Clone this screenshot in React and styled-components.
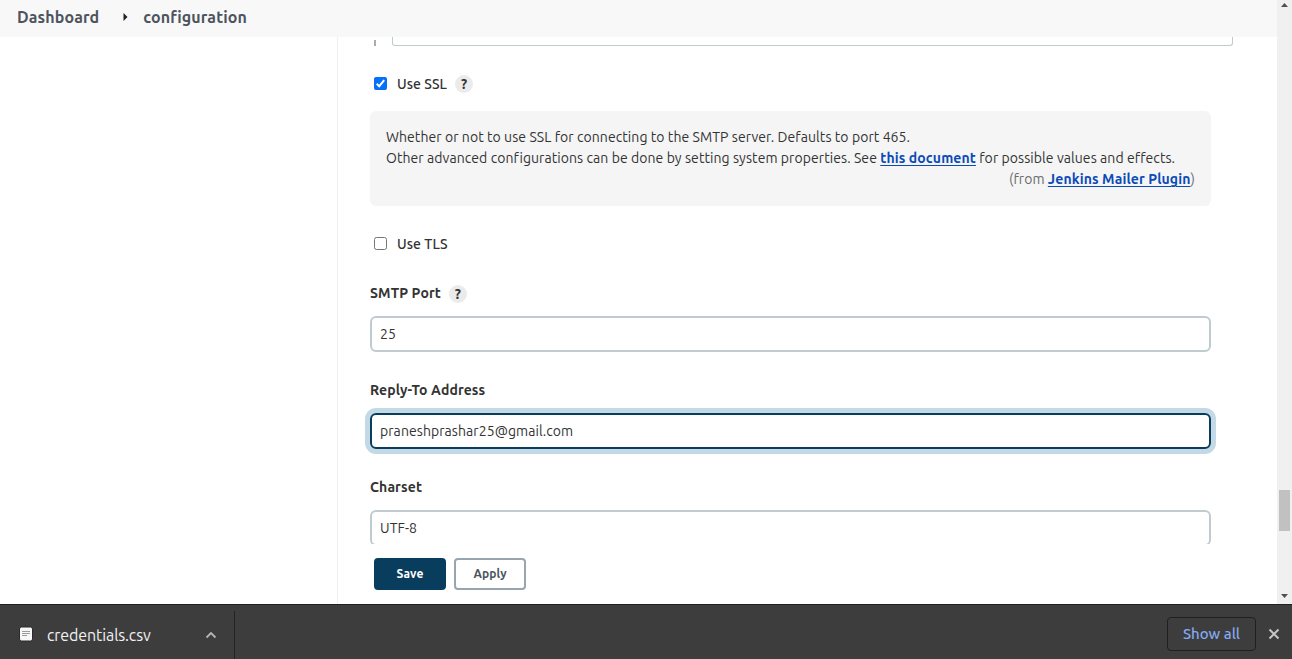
import React from 'react';
import styled, { createGlobalStyle } from 'styled-components';

const GlobalStyle = createGlobalStyle`
  *, *::before, *::after { box-sizing: border-box; }
  body {
    margin: 0;
    overflow: hidden;
    background: #fff;
    color: #333;
    font-family: Ubuntu, "Noto Sans", "Open Sans", sans-serif;
    font-size: 14px;
    line-height: 21px;
  }
`;

const Window = styled.div`
  display: flex;
  flex-direction: column;
  width: 100%;
  height: 100vh;
`;

const Page = styled.div`
  display: flex;
  height: 604px;
  flex: none;
`;

const PageBody = styled.div`
  display: flex;
  flex-direction: column;
  flex: 1;
  min-width: 0;
`;

const Breadcrumbs = styled.nav`
  display: flex;
  align-items: center;
  height: 37px;
  flex: none;
  padding: 0 17px 3px;
  background: #f8f8f8;
`;

const Crumb = styled.span`
  color: #4d545d;
  font-size: 16px;
  font-weight: 600;
  letter-spacing: 0.12px;
  white-space: nowrap;
`;

const CrumbArrow = styled.svg`
  width: 5px;
  height: 8px;
  margin: 0 15px 0 24px;
`;

const Columns = styled.div`
  display: flex;
  flex: 1;
  min-height: 0;
`;

const SidePanel = styled.aside`
  width: 338px;
  flex: none;
  border-right: 1px solid #f0f0f0;
`;

const Main = styled.main`
  display: flex;
  flex-direction: column;
  flex: 1;
  min-width: 0;
`;

const Form = styled.div`
  height: 507px;
  flex: none;
  overflow: hidden;
  padding: 0 66px 0 32px;
`;

const NestedEntry = styled.div`
  display: flex;
  height: 9px;
  margin: 0 -22px 0 4px;
`;

const NestedMarker = styled.div`
  width: 2px;
  height: 6px;
  margin: 3px 16px 0 0;
  background: #a9abad;
`;

const NestedInput = styled.div`
  flex: 1;
  border: solid #c0cbd0;
  border-width: 0 1px 1px;
  border-radius: 0 0 3px 3px;
`;

const CheckRow = styled.label`
  display: flex;
  align-items: center;
  height: 20px;
  margin-top: ${(p) => p.$gap}px;
  padding-left: 4px;
`;

const Box = styled.svg`
  width: 13px;
  height: 13px;
  margin: 0 10px 1px 0;
`;

const CheckLabel = styled.span`
  font-weight: 500;
  letter-spacing: 0.05px;
`;

const Help = styled.span`
  display: flex;
  align-items: center;
  justify-content: center;
  width: 18px;
  height: 18px;
  margin-left: 8px;
  border-radius: 50%;
  background: #ebebeb;
  font-size: 14px;
  font-weight: 700;
  line-height: 18px;
`;

const HelpPanel = styled.section`
  height: 95px;
  margin-top: 17px;
  padding: 16px;
  border-radius: 6px;
  background: #f5f5f5;
  letter-spacing: 0.07px;
  white-space: nowrap;
`;

const Source = styled.div`
  color: #6b6b6b;
  text-align: right;
`;

const Link = styled.a`
  color: #0b4bb8;
  font-weight: 700;
  letter-spacing: 0.11px;
  text-decoration: underline;
  text-underline-offset: 2px;
  text-decoration-thickness: 1px;
`;

const Field = styled.div`
  margin-top: ${(p) => p.$gap}px;
`;

const FieldLabel = styled.div`
  display: flex;
  align-items: center;
  height: 20px;
  margin-bottom: 13px;
  font-weight: 600;
  letter-spacing: 0.12px;

  ${Help} { margin-top: 2px; }
`;

const Input = styled.div`
  display: flex;
  align-items: center;
  height: 36px;
  padding: 0 8px;
  border: 2px solid ${(p) => (p.$focused ? '#083d5e' : '#c0cbd0')};
  border-radius: 6px;
  box-shadow: ${(p) => (p.$focused ? '0 0 0 5px #c3d9e6' : 'none')};
  letter-spacing: 0.07px;
`;

const Actions = styled.div`
  display: flex;
  gap: 8px;
  padding: 14px 36px;
`;

const Button = styled.button`
  width: 72px;
  height: 32px;
  padding: 0 0 1px;
  border: 2px solid ${(p) => (p.$primary ? '#083d5e' : '#98a4ae')};
  border-radius: 4px;
  background: ${(p) => (p.$primary ? '#083d5e' : '#fff')};
  color: ${(p) => (p.$primary ? '#fff' : '#4d545d')};
  font: 700 12px/18px Ubuntu, "Noto Sans", sans-serif;
  letter-spacing: 0.1px;
`;

const Scrollbar = styled.div`
  display: flex;
  flex-direction: column;
  align-items: center;
  width: 15px;
  flex: none;
  background: #f0f0f0;
`;

const ScrollArrow = styled.svg`
  width: 15px;
  height: 16px;
`;

const Thumb = styled.div`
  width: 11px;
  height: 41px;
  margin: 474px 0 57px;
  background: #c1c1c1;
`;

const Shelf = styled.footer`
  display: flex;
  align-items: center;
  height: 55px;
  flex: none;
  border-top: 1px solid #202020;
  background: #3d3d3d;
`;

const Download = styled.div`
  display: flex;
  align-items: center;
  align-self: flex-end;
  width: 235px;
  height: 48px;
  padding: 0 16px 0 19px;
  border-right: 1px solid #232323;
`;

const FileIcon = styled.svg`
  width: 14px;
  height: 16px;
  margin: 0 14px 2px 0;
`;

const FileName = styled.span`
  flex: 1;
  color: #f1f1f1;
  font-size: 16px;
  letter-spacing: -0.1px;
`;

const Chevron = styled.svg`
  width: 13px;
  height: 10px;
`;

const ShowAll = styled.button`
  width: 89px;
  height: 34px;
  margin-left: auto;
  margin-top: 4px;
  padding: 0 0 1px;
  border: 1px solid #202020;
  border-radius: 4px;
  background: transparent;
  color: #84a9f0;
  font: 500 15px/20px Ubuntu, "Noto Sans", sans-serif;
`;

const Close = styled.svg`
  width: 12px;
  height: 12px;
  margin: 4px 12px 0;
`;

const CheckedBox = () => (
  <Box viewBox="0 0 13 13">
    <rect width="13" height="13" rx="2" fill="#0570fa" />
    <path d="M2.7 6.8 5.2 9.2 10.2 3.2" fill="none" stroke="#fff" strokeWidth="2" />
  </Box>
);

const EmptyBox = () => (
  <Box viewBox="0 0 13 13">
    <rect x=".5" y=".5" width="12" height="12" rx="2" fill="#fff" stroke="#767676" />
  </Box>
);

export default function App() {
  return (
    <Window>
      <GlobalStyle />
      <Page>
        <PageBody>
          <Breadcrumbs>
            <Crumb>Dashboard</Crumb>
            <CrumbArrow viewBox="0 0 5 8">
              <path d="M.5 0 4.5 4 .5 8z" fill="#222" />
            </CrumbArrow>
            <Crumb>configuration</Crumb>
          </Breadcrumbs>
          <Columns>
            <SidePanel />
            <Main>
              <Form>
                <NestedEntry>
                  <NestedMarker />
                  <NestedInput />
                </NestedEntry>
                <CheckRow $gap={28}>
                  <CheckedBox />
                  <CheckLabel>Use SSL</CheckLabel>
                  <Help>?</Help>
                </CheckRow>
                <HelpPanel>
                  <div>
                    Whether or not to use SSL for connecting to the SMTP server. Defaults to port 465.
                  </div>
                  <div>
                    Other advanced configurations can be done by setting system properties. See{' '}
                    <Link>this document</Link> for possible values and effects.
                  </div>
                  <Source>
                    (from <Link>Jenkins Mailer Plugin</Link>)
                  </Source>
                </HelpPanel>
                <CheckRow $gap={28}>
                  <EmptyBox />
                  <CheckLabel>Use TLS</CheckLabel>
                </CheckRow>
                <Field $gap={29}>
                  <FieldLabel>
                    SMTP Port
                    <Help>?</Help>
                  </FieldLabel>
                  <Input>25</Input>
                </Field>
                <Field $gap={28}>
                  <FieldLabel>Reply-To Address</FieldLabel>
                  <Input $focused>praneshprashar25@gmail.com</Input>
                </Field>
                <Field $gap={28}>
                  <FieldLabel>Charset</FieldLabel>
                  <Input>UTF-8</Input>
                </Field>
              </Form>
              <Actions>
                <Button $primary>Save</Button>
                <Button>Apply</Button>
              </Actions>
            </Main>
          </Columns>
        </PageBody>
        <Scrollbar>
          <ScrollArrow viewBox="0 0 15 16">
            <path d="M4 7 7.5 3 11 7z" fill="#505050" />
          </ScrollArrow>
          <Thumb />
          <ScrollArrow viewBox="0 0 15 16">
            <path d="M4 6 7.5 10 11 6z" fill="#505050" />
          </ScrollArrow>
        </Scrollbar>
      </Page>
      <Shelf>
        <Download>
          <FileIcon viewBox="0 0 14 16">
            <rect x=".5" y="1" width="13" height="14" rx="2" fill="#f7f7f7" stroke="#2b2b2b" />
            <path d="M3 5.5h8M3 7.5h8M3 9.5h5" stroke="#9b9b9b" />
          </FileIcon>
          <FileName>credentials.csv</FileName>
          <Chevron viewBox="0 0 13 10">
            <path d="M1.5 7.5 6 3 10.5 7.5" fill="none" stroke="#b5b5b5" strokeWidth="1.8" />
          </Chevron>
        </Download>
        <ShowAll>Show all</ShowAll>
        <Close viewBox="0 0 12 12">
          <path d="M1.5 1.5l9 9M10.5 1.5l-9 9" stroke="#c4c4c4" strokeWidth="2" />
        </Close>
      </Shelf>
    </Window>
  );
}
